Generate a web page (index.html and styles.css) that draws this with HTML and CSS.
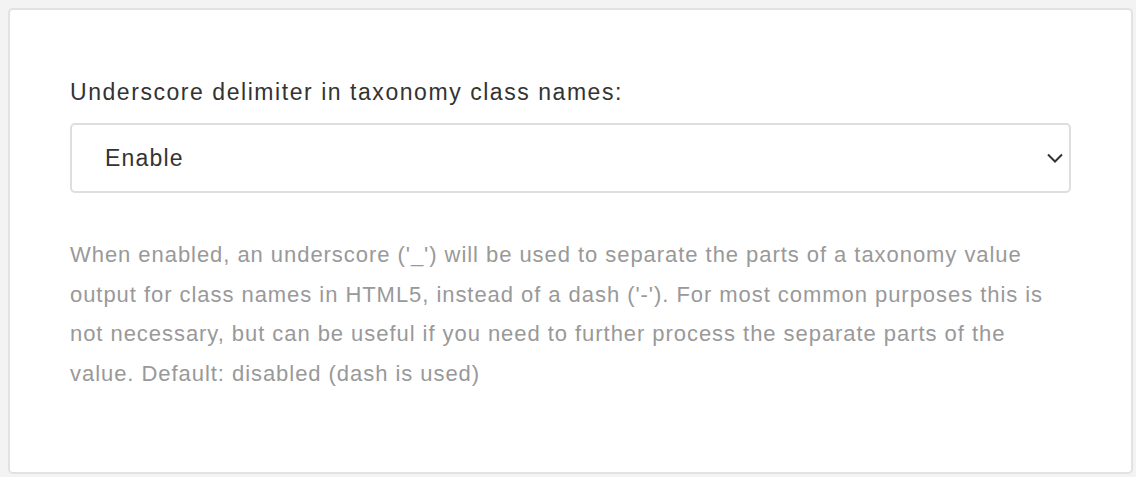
FILE: index.html
```html
<!DOCTYPE html>
<html>
<head>
<meta charset="utf-8">
<link rel="stylesheet" href="styles.css">
</head>
<body>
<div class="page">
  <div class="card">
    <label class="label" for="delim">Underscore delimiter in taxonomy class names:</label>
    <div class="select" id="delim">
      <span class="value">Enable</span>
      <svg class="chev" width="16" height="10" viewBox="0 0 16 10"><path d="M1 1.5 L8 8.5 L15 1.5" fill="none" stroke="#333" stroke-width="2"/></svg>
    </div>
    <p class="help">When enabled, an underscore ('_') will be used to separate the parts of a taxonomy value output for class names in HTML5, instead of a dash ('-'). For most common purposes this is not necessary, but can be useful if you need to further process the separate parts of the value. Default: disabled (dash is used)</p>
  </div>
</div>
</body>
</html>
```

FILE: styles.css
```css
html, body {
  margin: 0;
  padding: 0;
  background: #ffffff;
}
body {
  font-family: "Liberation Sans", Arial, sans-serif;
}
.page {
  background: #f3f3f3;
  height: 477px;
  box-sizing: border-box;
  padding: 8px 3px 3px 8px;
}
.card {
  background: #ffffff;
  border: 2px solid #e2e2e2;
  border-radius: 5px;
  height: 100%;
  box-sizing: border-box;
  padding: 69px 60px 0 60px;
}
.label {
  display: block;
  font-size: 23px;
  letter-spacing: 1.55px;
  color: #333333;
  line-height: 26px;
  margin-bottom: 18px;
}
.select {
  display: flex;
  align-items: center;
  justify-content: space-between;
  height: 70px;
  box-sizing: border-box;
  border: 2px solid #dedede;
  border-radius: 5px;
  padding: 0 6px 0 33px;
}
.value {
  font-size: 23px;
  letter-spacing: 1.2px;
  color: #333333;
}
.chev {
  display: block;
}
.help {
  margin: 42px 0 0 0;
  font-size: 22px;
  letter-spacing: 0.95px;
  line-height: 39.6px;
  color: #999999;
}
```
